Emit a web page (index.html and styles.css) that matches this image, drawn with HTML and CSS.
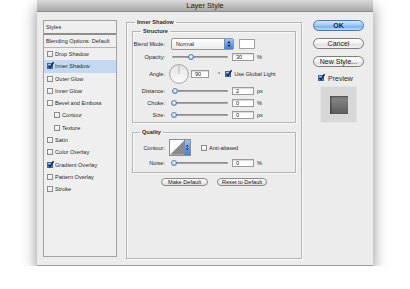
FILE: index.html
```html
<!DOCTYPE html>
<html lang="en">
<head>
    <meta charset="UTF-8">
    <title>Layer Style</title>
    <link rel="stylesheet" href="styles.css">
</head>
<body>
    <div class="window">
        <div class="titlebar">Layer Style</div>
        <div class="content">
            <!-- style list -->
            <ul class="styles">
                <li class="head">Styles</li>
                <li class="blend">Blending Options: Default</li>
                <li><span class="cb"></span>Drop Shadow</li>
                <li class="sel"><span class="cb on"><svg viewBox="0 0 6 6"><path d="M1.2 3.2 L2.6 4.8 L5.6 0.2" /></svg></span>Inner Shadow</li>
                <li><span class="cb"></span>Outer Glow</li>
                <li><span class="cb"></span>Inner Glow</li>
                <li><span class="cb"></span>Bevel and Emboss</li>
                <li class="sub"><span class="cb"></span>Contour</li>
                <li class="sub"><span class="cb"></span>Texture</li>
                <li><span class="cb"></span>Satin</li>
                <li><span class="cb"></span>Color Overlay</li>
                <li><span class="cb on"><svg viewBox="0 0 6 6"><path d="M1.2 3.2 L2.6 4.8 L5.6 0.2" /></svg></span>Gradient Overlay</li>
                <li><span class="cb"></span>Pattern Overlay</li>
                <li><span class="cb"></span>Stroke</li>
            </ul>

            <!-- settings -->
            <fieldset class="main">
                <legend>Inner Shadow</legend>
                <fieldset class="structure">
                    <legend>Structure</legend>
                    <div class="row r12">
                        <label>Blend Mode:</label>
                        <div class="select">Normal<span class="stepper"><svg viewBox="0 0 8 12"><path d="M2 5 L4 2.5 L6 5 Z M2 7 L4 9.5 L6 7 Z" /></svg></span></div>
                        <span class="swatch"></span>
                    </div>
                    <div class="row r13">
                        <label>Opacity:</label>
                        <div class="slider"><span class="thumb" style="left: 30%"></span></div>
                        <span class="field">30</span><span class="unit">%</span>
                    </div>
                    <div class="row r21">
                        <label class="tight">Angle:</label>
                        <svg class="dial" viewBox="0 0 20 20">
                            <defs>
                                <linearGradient id="dg" x1="0" y1="0" x2="0" y2="1">
                                    <stop offset="0" stop-color="#e4e4e4" />
                                    <stop offset="1" stop-color="#fbfbfb" />
                                </linearGradient>
                            </defs>
                            <circle cx="10" cy="10" r="9.4" fill="url(#dg)" stroke="#8e8e8e" stroke-width="0.8" />
                            <line x1="10" y1="10" x2="10" y2="2" stroke="#9a9a9a" stroke-width="0.7" />
                        </svg>
                        <span class="field angle">90</span><span class="deg">°</span>
                        <span class="cb on global"><svg viewBox="0 0 6 6"><path d="M1.2 3.2 L2.6 4.8 L5.6 0.2" /></svg></span><span>Use Global Light</span>
                    </div>
                    <div class="row r13">
                        <label>Distance:</label>
                        <div class="slider"><span class="thumb" style="left: 2%"></span></div>
                        <span class="field">2</span><span class="unit">px</span>
                    </div>
                    <div class="row r12">
                        <label>Choke:</label>
                        <div class="slider"><span class="thumb" style="left: 0%"></span></div>
                        <span class="field">0</span><span class="unit">%</span>
                    </div>
                    <div class="row r12">
                        <label>Size:</label>
                        <div class="slider"><span class="thumb" style="left: 0%"></span></div>
                        <span class="field">0</span><span class="unit">px</span>
                    </div>
                </fieldset>

                <fieldset class="quality">
                    <legend>Quality</legend>
                    <div class="row r17">
                        <label class="tight">Contour:</label>
                        <div class="contour">
                            <svg class="curve" viewBox="0 0 16 16">
                                <rect x="0" y="0" width="16" height="16" fill="#fff" />
                                <path d="M0 16 L16 0 L16 16 Z" fill="#8a8a8a" />
                            </svg>
                            <span class="stepper"><svg viewBox="0 0 5 16"><path d="M1 7 L2.5 5 L4 7 Z M1 9 L2.5 11 L4 9 Z" /></svg></span>
                        </div>
                        <span class="cb anti"></span><span>Anti-aliased</span>
                    </div>
                    <div class="row r12">
                        <label>Noise:</label>
                        <div class="slider"><span class="thumb" style="left: 0%"></span></div>
                        <span class="field">0</span><span class="unit">%</span>
                    </div>
                </fieldset>

                <div class="defaults">
                    <button class="small">Make Default</button>
                    <button class="small wide">Reset to Default</button>
                </div>
            </fieldset>

            <!-- buttons -->
            <div class="side">
                <button class="big ok">OK</button>
                <button class="big">Cancel</button>
                <button class="big">New Style...</button>
                <div class="preview-row">
                    <span class="cb on"><svg viewBox="0 0 6 6"><path d="M1.2 3.2 L2.6 4.8 L5.6 0.2" /></svg></span>Preview
                </div>
                <div class="thumbnail"><span class="square"></span></div>
            </div>
        </div>
    </div>
</body>
</html>
```

FILE: styles.css
```css
body {
    margin: 0;
    background-color: #fff;
    font-family: "Liberation Sans", Arial, sans-serif;
    font-size: 5.6px;
    color: #2a2a2a;
}

.window {
    margin-left: 37px;
    width: 336px;
    height: 266px;
    box-sizing: border-box;
    background-color: #ececec;
    border-bottom: 1px solid #9c9c9c;
    box-shadow: 0 7px 14px rgba(0, 0, 0, 0.45);
}

.titlebar {
    height: 12px;
    line-height: 12px;
    box-sizing: border-box;
    text-align: center;
    font-size: 7.5px;
    color: #222;
    background: linear-gradient(#dadada, #a9a9a9);
    border-bottom: 1px solid #8c8c8c;
}

.content {
    display: flex;
    align-items: flex-start;
    padding: 0 9px 0 6px;
}

/* style list */
.styles {
    list-style: none;
    margin: 8px 0 0;
    padding: 0;
    width: 74px;
    height: 237px;
    box-sizing: border-box;
    border: 1px solid #a4a4a4;
    background-color: #efefef;
}

.styles li {
    height: 12.27px;
    display: flex;
    align-items: center;
    padding-left: 3px;
    white-space: nowrap;
}

.styles li.head {
    height: 12px;
    padding-left: 2px;
    border-bottom: 2px solid #8e8e8e;
}

.styles li.blend {
    height: 12px;
    padding-left: 2px;
    border-bottom: 1px solid #b4b4b4;
}

.styles li.sub {
    padding-left: 10px;
}

.styles li.sel {
    background-color: #c3d9f1;
}

.cb {
    width: 6px;
    height: 6px;
    box-sizing: border-box;
    border: 1px solid #8c8c8c;
    background: linear-gradient(#fff, #e8e8e8);
    margin-right: 2px;
    flex: none;
    position: relative;
}

.cb.on {
    background: linear-gradient(#a9c9ef, #4d88d6);
    border-color: #3d6aa6;
}

.cb svg {
    position: absolute;
    left: -1px;
    top: -2px;
    width: 7px;
    height: 7px;
    overflow: visible;
}

.cb svg path {
    fill: none;
    stroke: #16244a;
    stroke-width: 1.3;
}

/* groups */
fieldset {
    margin: 0;
    padding: 0;
    min-width: 0;
    border: 1px solid #b6b6b6;
    box-shadow: inset 1px 1px 0 #f8f8f8, 1px 1px 0 #f8f8f8;
}

legend {
    font-weight: bold;
    line-height: 8px;
    padding: 0 2px;
    margin-left: 8px;
}

.main {
    width: 176px;
    height: 241px;
    box-sizing: border-box;
    margin: 6px 0 0 9px;
}

.structure {
    margin: 1px 5px 0;
    padding: 3px 0 1px;
}

.quality {
    margin: 5px 5px 0;
    padding: 3px 0 3px;
}

.quality legend {
    margin-left: 7px;
}

.row {
    display: flex;
    align-items: center;
    white-space: nowrap;
}

.r12 { height: 12px; }
.r13 { height: 13px; }
.r17 { height: 17px; margin-bottom: 1px; }
.r21 { height: 21px; }

.row label {
    width: 32px;
    flex: none;
    text-align: right;
    margin-right: 6px;
}

.row label.tight {
    margin-right: 4px;
}

.select {
    width: 63px;
    height: 12px;
    box-sizing: border-box;
    border: 1px solid #999;
    border-radius: 2px;
    background: linear-gradient(#fff, #ececec);
    display: flex;
    align-items: center;
    padding-left: 4px;
    justify-content: space-between;
}

.stepper {
    width: 8px;
    height: 10px;
    background: linear-gradient(#9cc3ee, #3f7fd2);
    border-left: 1px solid #6a8fbf;
    display: flex;
}

.stepper svg {
    width: 100%;
    height: 100%;
    fill: #10204a;
}

.swatch {
    width: 16px;
    height: 10px;
    box-sizing: border-box;
    margin-left: 5px;
    border: 1px solid #a0a0a0;
    background-color: #fff;
}

.slider {
    width: 57px;
    height: 6px;
    margin-right: 4px;
    position: relative;
    flex: none;
}

.slider::before {
    content: "";
    position: absolute;
    left: 1px;
    right: 0;
    top: 2px;
    height: 2px;
    background: linear-gradient(#7d7d7d, #b5b5b5);
    border-radius: 1px;
}

.thumb {
    position: absolute;
    top: 0;
    width: 6px;
    height: 6px;
    box-sizing: border-box;
    border-radius: 50%;
    border: 1px solid #5b7fae;
    background: radial-gradient(circle at 50% 40%, #ffffff 0, #cfe1f6 45%, #6f9fd9 100%);
}

.field {
    width: 22px;
    height: 8px;
    box-sizing: border-box;
    border: 1px solid #9a9a9a;
    box-shadow: inset 0 1px 1px rgba(0, 0, 0, 0.15);
    background-color: #fff;
    padding-left: 3px;
    line-height: 6px;
    flex: none;
}

.field.angle {
    width: 18px;
    margin-left: 2px;
}

.unit {
    margin-left: 3px;
}

.deg {
    margin-left: 9px;
}

.dial {
    width: 20px;
    height: 20px;
    flex: none;
}

.cb.global {
    margin-left: 5px;
    margin-right: 3px;
}

.contour {
    width: 22px;
    height: 17px;
    box-sizing: border-box;
    border: 1px solid #8e8e8e;
    background-color: #fff;
    display: flex;
    justify-content: space-between;
}

.contour .curve {
    width: 15px;
    height: 15px;
}

.contour .stepper {
    width: 5px;
    height: 15px;
}

.cb.anti {
    margin-left: 10px;
    margin-right: 2px;
}

.defaults {
    display: flex;
    justify-content: center;
    gap: 9px;
    margin-top: 5px;
}

button {
    font-family: "Liberation Sans", Arial, sans-serif;
    color: #222;
    padding: 0;
    cursor: pointer;
}

.small {
    width: 47px;
    height: 8px;
    font-size: 5.6px;
    line-height: 6px;
    border: 1px solid #8a8a8a;
    border-radius: 4px;
    background: linear-gradient(#ffffff, #dedede);
}

.small.wide {
    width: 50px;
}

/* right column */
.side {
    width: 51px;
    margin: 8px 0 0 11px;
    display: flex;
    flex-direction: column;
}

.big {
    height: 11px;
    font-size: 7px;
    line-height: 9px;
    border: 1px solid #7c7c7c;
    border-radius: 6px;
    background: linear-gradient(#ffffff, #f0f0f0 50%, #dcdcdc 51%, #f2f2f2);
    margin-bottom: 7px;
}

.big.ok {
    font-weight: bold;
    border-color: #4f77ad;
    background: linear-gradient(#d2e6fb, #9cc6f1 50%, #6eaaea 51%, #b7dcfb);
}

.preview-row {
    display: flex;
    align-items: center;
    height: 8px;
    font-size: 7px;
    margin-left: 5px;
}

.preview-row .cb {
    margin-right: 4px;
}

.thumbnail {
    width: 37px;
    height: 37px;
    box-sizing: border-box;
    margin: 4px 0 0 7px;
    background-color: #d8d8d8;
    border: 1px solid #e4e4e4;
    display: flex;
    align-items: center;
    justify-content: center;
}

.square {
    width: 18px;
    height: 18px;
    background: linear-gradient(#8a8a8a, #5c5c5c);
    box-shadow: inset 1px 1px 2px rgba(0, 0, 0, 0.5);
}
```
